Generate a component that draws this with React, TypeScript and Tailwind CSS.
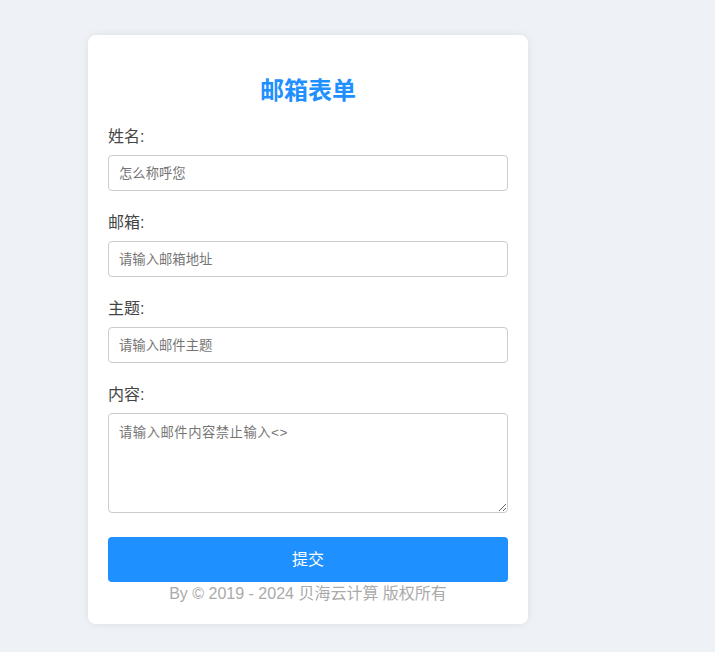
import React from "react";

const font = { fontFamily: '"Liberation Sans", "Noto Sans CJK SC", sans-serif' };

function Field({ label, placeholder }: { label: string; placeholder: string }) {
  return (
    <div className="mb-5">
      <label className="block text-[16px] leading-6 text-[#444] mb-[6px]">{label}</label>
      <input
        className="block w-full h-[36px] border border-[#ccc] rounded-[4px] px-[10px] text-[13.33px] text-[#333] placeholder:text-[#757575] outline-none"
        placeholder={placeholder}
      />
    </div>
  );
}

export default function App() {
  return (
    <div className="min-h-[652px] w-full bg-[#eef2f6] pt-[35px] pl-[88px]" style={font}>
      <div className="w-[440px] bg-white rounded-[8px] shadow-[0_0_8px_rgba(0,0,0,0.08)] px-5 pt-5 pb-5">
        <h2 className="mt-5 mb-[18px] text-center text-[24px] leading-8 font-bold text-[#1e90ff]">邮箱表单</h2>
        <Field label="姓名:" placeholder="怎么称呼您" />
        <Field label="邮箱:" placeholder="请输入邮箱地址" />
        <Field label="主题:" placeholder="请输入邮件主题" />
        <div className="mb-[24px]">
          <label className="block text-[16px] leading-6 text-[#444] mb-[6px]">内容:</label>
          <textarea
            className="block w-full h-[100px] border border-[#ccc] rounded-[4px] px-[10px] pt-[12px] pb-[8px] text-[13.33px] leading-[16px] tracking-[0.5px] text-[#333] placeholder:text-[#757575] outline-none"
            style={{ fontFamily: '"Liberation Mono", "Noto Sans CJK SC", monospace' }}
            placeholder="请输入邮件内容禁止输入<>"
          />
        </div>
        <button className="block w-full h-[45px] rounded-[4px] bg-[#1e90ff] text-white text-[16px]">提交</button>
        <p className="text-center text-[16px] leading-5 text-[#aaa] mt-[2px]">By © 2019 - 2024 贝海云计算 版权所有</p>
      </div>
    </div>
  );
}
